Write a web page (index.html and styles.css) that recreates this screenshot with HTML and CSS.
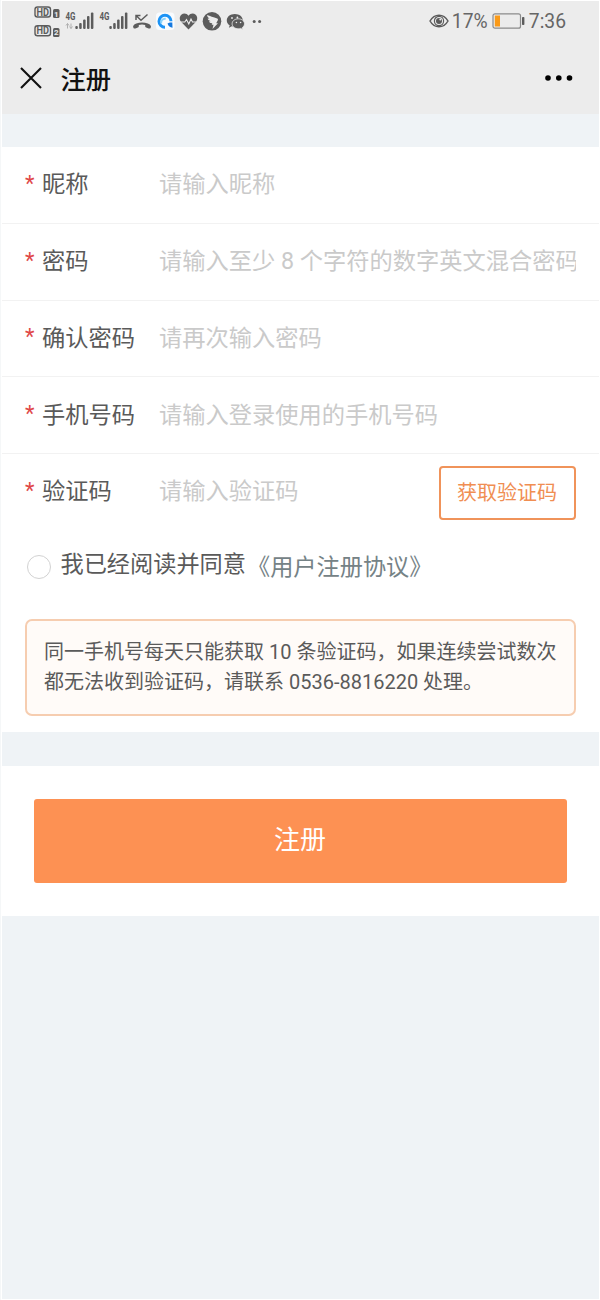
FILE: index.html
```html
<!DOCTYPE html>
<html lang="zh-CN">
<head>
<meta charset="utf-8">
<title>注册</title>
<link rel="stylesheet" href="styles.css">
</head>
<body>
<div class="page">
  <header class="top">
    <div class="status">
      <svg class="status-icons" width="240" height="40" viewBox="30 0 240 40" fill="#5c5c5c">
        <g fill="none" stroke="#5c5c5c" stroke-width="1.400">
          <rect x="35" y="7" width="15.500" height="10" rx="2.500"/>
          <rect x="35" y="25.800" width="15.500" height="10" rx="2.500"/>
        </g>
        <g font-family="Roboto, sans-serif" font-weight="700">
          <text x="36.600" y="15.600" font-size="10" textLength="12.500" lengthAdjust="spacingAndGlyphs">HD</text>
          <text x="36.600" y="34.400" font-size="10" textLength="12.500" lengthAdjust="spacingAndGlyphs">HD</text>
          <rect x="53" y="9" width="6.500" height="9" rx="1.500"/>
          <rect x="53" y="28" width="6.500" height="9" rx="1.500"/>
          <text x="54.100" y="16.500" font-size="8" fill="#ececec">1</text>
          <text x="54" y="35.400" font-size="8" fill="#ececec">2</text>
          <text x="65.500" y="20.300" font-size="11" textLength="10" lengthAdjust="spacingAndGlyphs">4G</text>
          <text x="99.500" y="20.300" font-size="11" textLength="10" lengthAdjust="spacingAndGlyphs">4G</text>
        </g>
        <path d="M67.500 28.500v-5m-1.500 2l1.500-2 1.500 2M71 23.500v5m-1.500-2l1.500 2 1.500-2" fill="none" stroke="#b0b0b0" stroke-width="1"/>
        <g id="bars">
          <rect x="75.300" y="26" width="2.500" height="3" rx="1"/>
          <rect x="79.200" y="23" width="2.500" height="6" rx="1"/>
          <rect x="83.100" y="19.500" width="2.500" height="9.500" rx="1"/>
          <rect x="87" y="16" width="2.500" height="13" rx="1"/>
          <rect x="90.900" y="12.500" width="2.500" height="16.500" rx="1"/>
        </g>
        <use href="#bars" x="34"/>
        <path d="M133.500 28c-1.200-1.800.3-3.400 2.800-4.400 3.500-1.400 8-1.400 11.500 0 2.500 1 4 2.600 2.800 4.400-.5.800-1.200.7-2 .4l-2.500-.9c-.7-.3-.9-.8-.9-1.500v-1c-2-.7-4.400-.7-6.400 0v1c0 .7-.2 1.200-.9 1.500l-2.500.9c-.8.300-1.400.3-1.900-.4z"/>
        <path d="M136 20v-4.500h4.500M136.300 15.800l4.700 4.400 6.500-5.700" fill="none" stroke="#5c5c5c" stroke-width="1.500"/>
        <rect x="156" y="12.500" width="18.500" height="17.500" rx="3.500" fill="#f8fbfe"/>
        <path d="M165 27.200a6 6 0 1 1 6-6" fill="none" stroke="#1c93f5" stroke-width="3"/>
        <path d="M161.200 23.500a4 4 0 0 1 4.500-4.800" fill="none" stroke="#8ad3fb" stroke-width="2"/>
        <path d="M167.500 23.600c.8 2.500 2.500 4 5 4.200l-.2-5.300h-2.500z" fill="#1478df"/>
        <path d="M188.500 29.500l-7-7.200c-2.300-2.400-2.200-5.700-.2-7.600 2.300-2.100 5.400-1.600 7.200 1 1.800-2.600 4.900-3.100 7.200-1 2 1.900 2.100 5.200-.2 7.600z"/>
        <path d="M180 22h4.800l1.700-2.500 2.300 4.500 2.200-5 1.500 3h4" fill="none" stroke="#ececec" stroke-width="1.100"/>
        <circle cx="212" cy="21.300" r="9.300"/>
        <path d="M207 15c3 1.200 6.500 2 10.200 3.500.8.400.9 1 .6 1.700l-1.600 3h1.800l-5.500 5.800 1-4.200h-1.800l.6-1.500c-2 .1-3-.8-3.300-2l1.700-.1c-2-.7-2.900-1.700-3-2.700l1.800.1c-1.500-1-2.300-2.200-2.500-3.600z" fill="#ececec"/>
        <path d="M234.800 14c-4.600 0-8 2.800-8 6.400 0 2 1.100 3.700 2.900 4.900l-.8 2.400 2.900-1.400c1 .3 1.900.4 3 .4 4.600 0 8-2.700 8-6.300s-3.400-6.400-8-6.400z"/>
        <path d="M238.300 18.800c3.400 0 6.200 2.200 6.200 5 0 1.600-.9 2.900-2.200 3.800l.6 1.900-2.200-1.100c-.8.200-1.500.4-2.400.4-3.500 0-6.200-2.200-6.200-5s2.700-5 6.200-5z" stroke="#ececec" stroke-width=".8"/>
        <g fill="#ececec"><circle cx="232" cy="18" r=".9"/><circle cx="237.400" cy="17.500" r=".9"/><circle cx="236.400" cy="22.500" r=".8"/><circle cx="240.600" cy="22.500" r=".8"/></g>
        <circle cx="254.200" cy="21.500" r="1.500"/><circle cx="259.600" cy="21.500" r="1.500"/>
      </svg>
      <div class="status-right">
        <svg width="20" height="16" viewBox="0 0 20 16" fill="none" stroke="#5c5c5c" stroke-width="1.500">
          <path d="M1 8C5.500.2 14.500.2 19 8 14.500 15.800 5.500 15.800 1 8z"/>
          <circle cx="10" cy="8" r="4.600" stroke-width="1.200"/><circle cx="10" cy="8" r="3" fill="#5c5c5c" stroke="none"/><circle cx="11.300" cy="6.600" r="1" fill="#ececec" stroke="none"/>
        </svg>
        <span class="percent">17%</span>
        <svg class="battery" width="34" height="16" viewBox="0 0 34 16">
          <rect x="1" y=".8" width="27.500" height="14.400" rx="2" fill="none" stroke="#8b8b8b" stroke-width="1.200"/>
          <rect x="2.800" y="2.500" width="5.200" height="11" fill="#fb9a17"/>
          <rect x="30" y="4" width="2.400" height="8" rx=".8" fill="#5c5c5c"/>
        </svg>
        <span class="time">7:36</span>
      </div>
    </div>
    <div class="nav">
      <svg width="22" height="22" viewBox="0 0 22 22" stroke="#111" stroke-width="2.100"><path d="M1 1l20 20M21 1L1 21"/></svg>
      <h1 class="title">注册</h1>
      <svg class="more" width="28" height="6" viewBox="0 0 28 6" fill="#000"><circle cx="3" cy="3" r="2.800"/><circle cx="13.800" cy="3" r="2.800"/><circle cx="24.500" cy="3" r="2.800"/></svg>
    </div>
  </header>
  <main>
    <form class="form">
      <div class="row"><span class="star">*</span><label class="label">昵称</label><input class="input" placeholder="请输入昵称"></div>
      <div class="row"><span class="star">*</span><label class="label">密码</label><input class="input" placeholder="请输入至少 8 个字符的数字英文混合密码"></div>
      <div class="row"><span class="star">*</span><label class="label">确认密码</label><input class="input" placeholder="请再次输入密码"></div>
      <div class="row"><span class="star">*</span><label class="label">手机号码</label><input class="input" placeholder="请输入登录使用的手机号码"></div>
      <div class="row row-code"><span class="star">*</span><label class="label">验证码</label><input class="input" placeholder="请输入验证码"><button type="button" class="code">获取验证码</button></div>
      <div class="agree"><span class="radio"></span><span class="agree-text">我已经阅读并同意</span><a class="terms">《用户注册协议》</a></div>
      <p class="note">同一手机号每天只能获取 10 条验证码，如果连续尝试数次<br>都无法收到验证码，请联系 0536-8816220 处理。</p>
    </form>
    <div class="actions"><button type="button" class="submit">注册</button></div>
  </main>
</div>
</body>
</html>
```
FILE: styles.css
```css
* { box-sizing: border-box; }
body {
  margin: 0;
  background: #f5f7f8;
  font-family: Roboto, "Noto Sans CJK SC", sans-serif;
  color: #5a5a5a;
}
.page {
  height: 1300px;
  margin-left: 1px;
  border: 1px solid #fff;
  background: #eff3f6;
  overflow: hidden;
}
.top { height: 113px; background: #ececec; }
.status { height: 40px; display: flex; justify-content: space-between; }
.status-icons { margin: -1px 0 0 28px; }
.status-right { display: flex; align-items: center; height: 40px; margin-right: 33px; color: #666; }
.percent, .time { padding-top: 2px; font-size: 19.3px; line-height: 24px; }
.percent { margin-left: 3px; width: 37px; white-space: nowrap; }
.battery { margin: 0 3px 0 3px; }
.nav { display: flex; align-items: center; height: 74px; padding: 0 26px 0 18px; }
.title { margin: 5px 0 0 18.5px; font-size: 25.3px; line-height: 36px; font-weight: 500; color: #111; }
.more { margin-left: auto; }
.form { height: 585px; margin-top: 33px; background: #fff; }
.row {
  display: flex;
  align-items: center;
  height: 76.8px;
  padding: 0 23px 1px;
  border-bottom: 1px solid #f2f2f2;
  font-size: 23.25px;
}
.row-code { height: 75px; border: 0; }
.star { width: 17px; padding-bottom: 2px; font-size: 22px; color: #e04848; }
.label { width: 117px; line-height: 34px; }
.input {
  flex: 1;
  min-width: 0;
  height: 36px;
  padding: 0;
  border: 0;
  background: none;
  font: inherit;
}
.input::placeholder { color: #cacaca; opacity: 1; }
.code {
  width: 137px;
  height: 54px;
  margin-top: 3px;
  padding: 0 1px 0 0;
  border: 2px solid #f0935a;
  border-radius: 4px;
  background: #fff;
  color: #f08e52;
  font: 20px/30px Roboto, "Noto Sans CJK SC", sans-serif;
}
.agree { display: flex; align-items: center; height: 70px; padding-left: 25px; font-size: 23.2px; line-height: 34px; }
.radio { width: 24px; height: 24px; margin-top: 5px; border: 1px solid #d2d2d2; border-radius: 50%; }
.agree-text { margin-left: 9.5px; }
.terms { margin: 5px 0 0 1px; color: #758286; }
.note {
  height: 97px;
  margin: 20px 23px 0;
  padding: 16px 16px 0 17px;
  border: 2px solid #f6cdb0;
  border-radius: 7px;
  background: #fffbf8;
  font-size: 20px;
  line-height: 30px;
  white-space: nowrap;
}
.actions { height: 150px; margin-top: 34px; padding: 33px 32px; background: #fff; }
.submit {
  display: block;
  width: 100%;
  height: 84px;
  padding: 0 1px 2px 0;
  border: 0;
  border-radius: 3px;
  background: #fd9153;
  color: #fff;
  font: 26px/38px Roboto, "Noto Sans CJK SC", sans-serif;
}
```
